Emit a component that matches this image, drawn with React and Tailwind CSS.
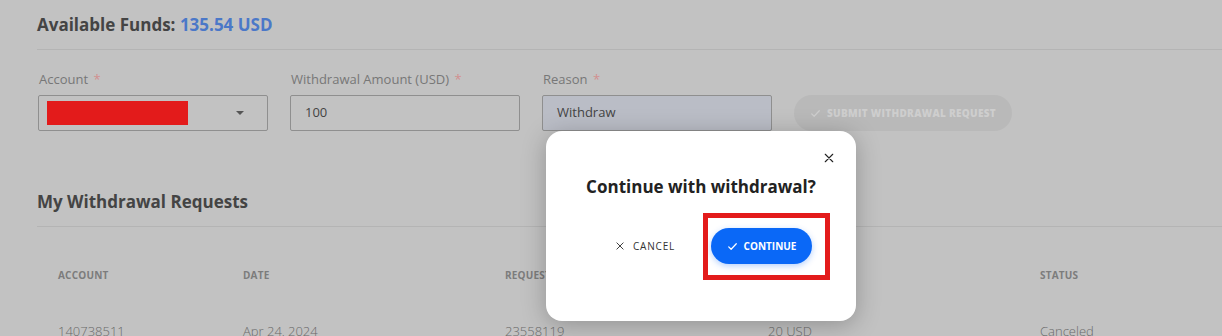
import React from "react";

const font = { fontFamily: '"Open Sans", "Liberation Sans", sans-serif' };

function Check({ className }) {
  return (
    <svg viewBox="0 0 16 16" className={className} fill="none" stroke="currentColor" strokeWidth="1.8" strokeLinecap="round" strokeLinejoin="round">
      <path d="M2.5 8.5l3.5 3.5 7.5-8" />
    </svg>
  );
}

function Cross({ className }) {
  return (
    <svg viewBox="0 0 16 16" className={className} fill="none" stroke="currentColor" strokeWidth="1.5" strokeLinecap="round">
      <path d="M3 3l10 10M13 3L3 13" />
    </svg>
  );
}

function Field({ label, children }) {
  return (
    <div className="flex flex-col w-[230px]">
      <div className="text-[13px] leading-[16px] text-[#777] mb-[8px] ml-[1px]">
        {label} <span className="text-[#d28f8f] ml-[2px]">*</span>
      </div>
      {children}
    </div>
  );
}

const columns = [
  { head: "ACCOUNT", value: "140738511" },
  { head: "DATE", value: "Apr 24, 2024" },
  { head: "REQUEST ID", value: "23558119" },
  { head: "AMOUNT", value: "20 USD" },
  { head: "STATUS", value: "Canceled" },
];

export default function App() {
  return (
    <div className="relative w-[1222px] h-[336px] overflow-hidden bg-[#c2c2c2]" style={font}>
      <div className="pl-[37px]">
        <div className="pt-[14px] pb-[13px] text-[17px] leading-[22px] font-bold text-[#444]">
          Available Funds: <span className="text-[#4b78c8]">135.54 USD</span>
        </div>
        <div className="h-px bg-[#b4b4b4]" />

        <div className="flex items-end gap-[22px] pt-[21px] pl-[1px]">
          <Field label="Account">
            <div className="h-[36px] border border-[#8f8f8f] rounded-[2px] flex items-center px-[8px]">
              <div className="w-[141px] h-[24px] bg-[#e31b1b]" />
              <svg viewBox="0 0 8 4" className="w-[8px] h-[4px] ml-auto mr-[15px] text-[#555]" fill="currentColor">
                <path d="M0 0h8L4 4z" />
              </svg>
            </div>
          </Field>
          <Field label="Withdrawal Amount (USD)">
            <div className="h-[36px] border border-[#8f8f8f] rounded-[2px] flex items-center px-[14px] text-[13px] text-[#444]">
              100
            </div>
          </Field>
          <Field label="Reason">
            <div className="h-[36px] border border-[#8f8f8f] rounded-[2px] bg-[#babdc6] flex items-center px-[14px] text-[13px] text-[#444]">
              Withdraw
            </div>
          </Field>
          <button className="h-[36px] w-[218px] rounded-full bg-[#b9b9b9] flex items-center justify-center gap-[6px] text-[#cecece] text-[10px] font-extrabold tracking-[0.3px]">
            <Check className="w-[11px] h-[11px]" />
            SUBMIT WITHDRAWAL REQUEST
          </button>
        </div>

        <div className="pt-[60px] pb-[13px] text-[17px] leading-[22px] font-bold text-[#444]">
          My Withdrawal Requests
        </div>
        <div className="h-px bg-[#b4b4b4]" />

        <div className="grid grid-cols-[185px_262px_263px_272px_1fr] pl-[21px] pt-[41px]">
          {columns.map((c) => (
            <div key={c.head} className="text-[10px] leading-[14px] font-bold text-[#7c7c7c] tracking-[0.2px]">
              {c.head}
            </div>
          ))}
          {columns.map((c) => (
            <div key={c.value} className="pt-[41px] text-[13px] leading-[16px] font-light text-[#6a6a6a]">
              {c.value}
            </div>
          ))}
        </div>
      </div>

      <div className="absolute left-[546px] top-[131px] w-[310px] h-[190px] rounded-[16px] bg-white shadow-[0_4px_24px_rgba(0,0,0,0.25)]">
        <button className="absolute right-[21px] top-[21px] text-[#222]">
          <Cross className="w-[12px] h-[12px]" />
        </button>
        <div className="pt-[45px] text-center text-[17px] leading-[22px] font-bold text-[#222]">
          Continue with withdrawal?
        </div>
        <div className="flex items-center pl-[69px] pt-[30px]">
          <button className="flex items-center gap-[8px] text-[10px] tracking-[0.8px] text-[#333]">
            <Cross className="w-[10px] h-[10px]" />
            CANCEL
          </button>
          <button className="ml-[36px] h-[36px] w-[101px] rounded-full bg-[#0a68f7] text-white text-[10px] font-bold flex items-center justify-center gap-[6px] shadow-[0_2px_6px_rgba(10,104,247,0.3)]">
            <Check className="w-[11px] h-[11px]" />
            CONTINUE
          </button>
        </div>
        <div className="absolute left-[157px] top-[82px] w-[127px] h-[67px] border-[5px] border-[#e31b1b]" />
      </div>
    </div>
  );
}
